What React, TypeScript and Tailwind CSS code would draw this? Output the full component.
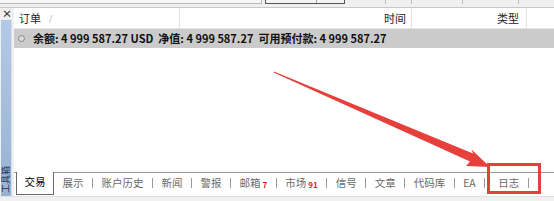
import React from "react";

const FONT = { fontFamily: '"Noto Sans CJK SC", "Liberation Sans", sans-serif' };

type Tab = { label: string; badge?: string; wide?: boolean };

const tabs: Tab[] = [
  { label: "展示" },
  { label: "账户历史" },
  { label: "新闻" },
  { label: "警报" },
  { label: "邮箱", badge: "7" },
  { label: "市场", badge: "91" },
  { label: "信号" },
  { label: "文章" },
  { label: "代码库" },
  { label: "EA" },
  { label: "日志", wide: true },
];

function Sidebar() {
  return (
    <div className="w-[14px] flex flex-col items-center bg-[#f0f0f0]">
      <div className="h-[12px] pt-[1px] text-[10px] leading-[10px] font-bold text-[#333]">×</div>
      <div className="flex-1 w-[11px] ml-[-2px] bg-gradient-to-b from-[#b2cae6] to-[#9ab2d2] border-r border-[#d8dde6] flex flex-col justify-end overflow-hidden">
        <div className="mb-[3px] h-[28px] flex items-center justify-center">
          <span className="block -rotate-90 whitespace-nowrap text-[9px] leading-[9px] text-[#1c2f55]">工具箱</span>
        </div>
      </div>
    </div>
  );
}

function Header() {
  return (
    <div className="h-[21px] flex text-[11px] text-[#222] border-b border-[#e6e6e6] bg-white">
      <div className="w-[166px] flex items-center pl-[5px] border-r border-[#e2e2e2]">
        <span>订单</span>
        <span className="ml-[8px] text-[8px] text-[#999]">/</span>
      </div>
      <div className="w-[232px] flex items-center justify-end pr-[5px] border-r border-[#e2e2e2]">时间</div>
      <div className="w-[115px] flex items-center justify-end pr-[7px] border-r border-[#e2e2e2]">类型</div>
      <div className="flex-1" />
    </div>
  );
}

function Summary() {
  return (
    <div className="h-[19px] flex items-center bg-[#cbcbcb] text-[11px] font-bold text-[#111]">
      <div className="ml-[4px] w-[7px] h-[7px] rounded-full border border-[#8a8a8a] bg-[#d8d8d8]" />
      <div className="ml-[8px] whitespace-pre">
        余额: 4 999 587.27 USD  净值: 4 999 587.27  可用预付款: 4 999 587.27
      </div>
    </div>
  );
}

function TabBar() {
  return (
    <div className="h-[24px] flex bg-white">
      <div className="w-[2px] border-t border-[#9a9a9a]" />
      <div className="w-[38px] h-[23px] flex justify-center pt-[3px] border-x border-b border-[#6a6a6a] bg-white text-[10.5px] leading-[14px] text-[#000]">
        交易
      </div>
      <div className="flex-1 flex items-start pt-[3px] border-t border-[#9a9a9a] text-[10.5px] leading-[14px] text-[#6a6a6a]">
        {tabs.map((t, i) => (
          <React.Fragment key={t.label}>
            {i > 0 && <div className="mt-[2px] w-px h-[10px] bg-[#9a9a9a]" />}
            <div className={`flex items-start pr-[8.5px] ${t.wide ? "pl-[13px]" : "pl-[8.5px]"}`}>
              <span>{t.label}</span>
              {t.badge && (
                <span className="mt-[5px] ml-[2px] text-[8px] leading-[8px] font-bold text-[#e02020]">{t.badge}</span>
              )}
            </div>
          </React.Fragment>
        ))}
        <div className="mt-[2px] w-px h-[10px] bg-[#9a9a9a]" />
      </div>
    </div>
  );
}

function TopStrip() {
  return (
    <div className="h-[8px] flex items-start bg-[#f0f0f0] border-b border-[#c8c8c8]">
      <div className="w-[262px] h-[4px] border-b border-r border-[#b8b8b8] bg-[#f7f7f7]" />
      <div className="ml-[3px] w-[80px] h-[4px] border-x border-b border-[#555] bg-[#f4f4f4] flex">
        <div className="ml-[50px] w-px h-full bg-[#aaa]" />
      </div>
      <div className="ml-[40px] w-px h-[4px] bg-[#bbb]" />
      <div className="ml-[25px] w-px h-[4px] bg-[#bbb]" />
      <div className="ml-[50px] w-px h-[4px] bg-[#bbb]" />
      <div className="ml-[55px] w-px h-[4px] bg-[#bbb]" />
    </div>
  );
}

function Annotation() {
  // arrow + box drawn over the screenshot
  return (
    <svg className="absolute inset-0 pointer-events-none" width={554} height={201} viewBox="0 0 554 201">
      <polygon points="274,71.5 473,153.5 471.5,149.5 490,167 466,166 470,161.5 273.6,72.5" fill="#e5403b" />
      <rect x={488.5} y={164.5} width={51} height={28} fill="none" stroke="#e5403b" strokeWidth={3} />
    </svg>
  );
}

export default function App() {
  return (
    <div className="relative w-[554px] h-[201px] overflow-hidden flex flex-col bg-[#f0f0f0]" style={FONT}>
      <TopStrip />
      <div className="flex h-[188px]">
        <Sidebar />
        <div className="flex-1 flex flex-col bg-white">
          <Header />
          <Summary />
          <div className="flex-1 bg-white" />
          <TabBar />
        </div>
      </div>
      <div className="flex-1 border-t border-[#e2e2e2] bg-[#f0f0f0]" />
      <Annotation />
    </div>
  );
}
